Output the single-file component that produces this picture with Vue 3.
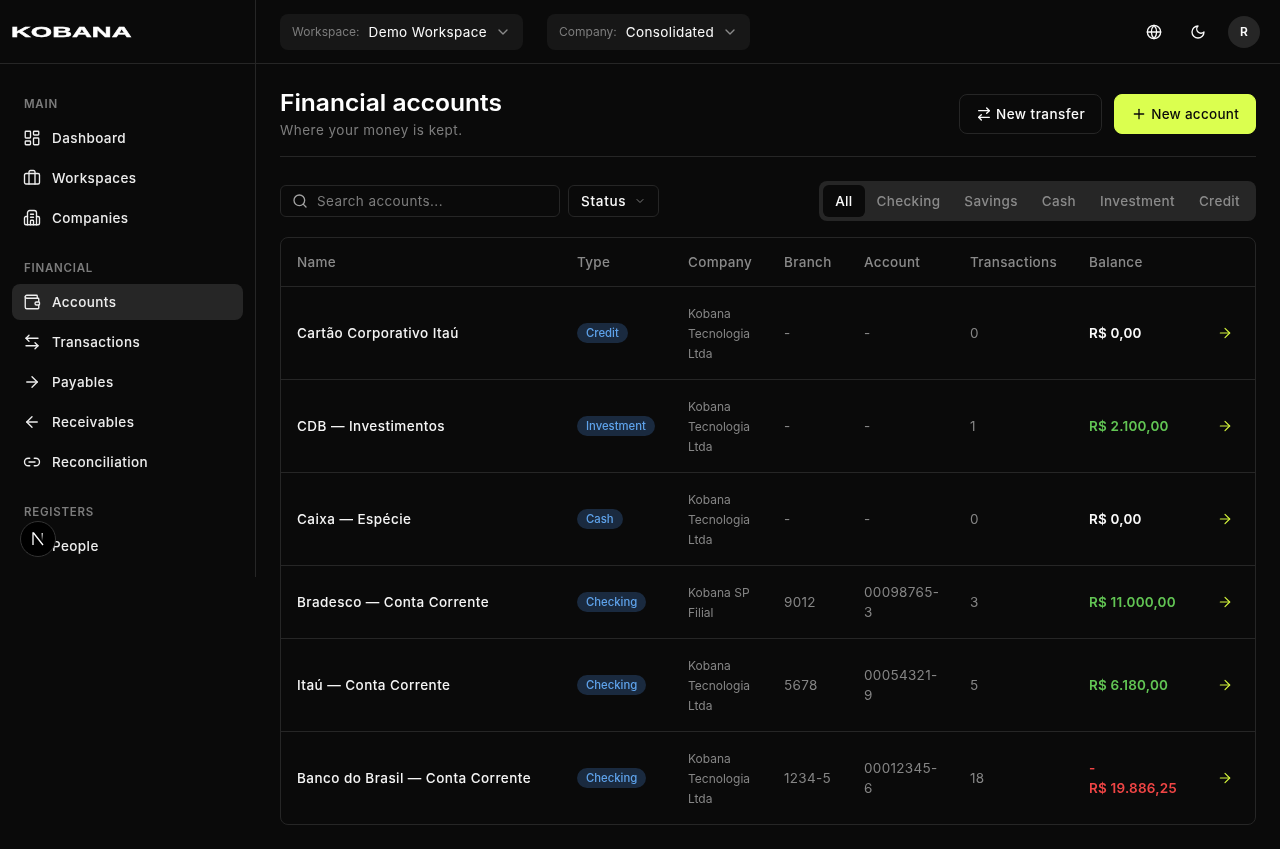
<script setup>
const navSections = [
  {
    title: 'Main',
    items: [
      { label: 'Dashboard', icon: 'dashboard' },
      { label: 'Workspaces', icon: 'briefcase' },
      { label: 'Companies', icon: 'building' }
    ]
  },
  {
    title: 'Financial',
    items: [
      { label: 'Accounts', icon: 'wallet', active: true },
      { label: 'Transactions', icon: 'swap' },
      { label: 'Payables', icon: 'right' },
      { label: 'Receivables', icon: 'left' },
      { label: 'Reconciliation', icon: 'link' }
    ]
  },
  {
    title: 'Registers',
    items: [{ label: 'People', icon: 'people' }]
  }
]

const iconPaths = {
  dashboard: '<rect x="3" y="3" width="7" height="9" rx="1"/><rect x="14" y="3" width="7" height="5" rx="1"/><rect x="14" y="12" width="7" height="9" rx="1"/><rect x="3" y="16" width="7" height="5" rx="1"/>',
  briefcase: '<path d="M16 20V4a2 2 0 0 0-2-2h-4a2 2 0 0 0-2 2v16"/><rect x="2" y="6" width="20" height="14" rx="2"/>',
  building: '<path d="M6 21V5a3 3 0 0 1 3-3h6a3 3 0 0 1 3 3v16"/><path d="M6 10H4a2 2 0 0 0-2 2v7a2 2 0 0 0 2 2h16a2 2 0 0 0 2-2v-7a2 2 0 0 0-2-2h-2"/><path d="M10 7h4"/><path d="M10 11h4"/><path d="M10 21v-5a1 1 0 0 1 1-1h2a1 1 0 0 1 1 1v5"/>',
  wallet: '<path d="M19 7V4a1 1 0 0 0-1-1H5a2 2 0 0 0 0 4h15a1 1 0 0 1 1 1v4h-3a2 2 0 0 0 0 4h3a1 1 0 0 0 1-1v-2a1 1 0 0 0-1-1"/><path d="M3 5v14a2 2 0 0 0 2 2h15a1 1 0 0 0 1-1v-4"/>',
  swap: '<path d="M8 3 4 7l4 4"/><path d="M4 7h16"/><path d="m16 21 4-4-4-4"/><path d="M20 17H4"/>',
  transfer: '<path d="m16 3 4 4-4 4"/><path d="M20 7H4"/><path d="m8 21-4-4 4-4"/><path d="M4 17h16"/>',
  right: '<path d="M5 12h14"/><path d="m12 5 7 7-7 7"/>',
  left: '<path d="m12 19-7-7 7-7"/><path d="M19 12H5"/>',
  link: '<path d="M9 17H7A5 5 0 0 1 7 7h2"/><path d="M15 7h2a5 5 0 1 1 0 10h-2"/><line x1="8" x2="16" y1="12" y2="12"/>',
  people: '<path d="M18 20v-2a4 4 0 0 0-4-4h-4a4 4 0 0 0-4 4v2"/><circle cx="12" cy="7" r="4"/>',
  globe: '<circle cx="12" cy="12" r="10"/><path d="M12 2a14.5 14.5 0 0 0 0 20 14.5 14.5 0 0 0 0-20"/><path d="M2 12h20"/>',
  moon: '<path d="M12 3a6 6 0 0 0 9 9 9 9 0 1 1-9-9Z"/>',
  plus: '<path d="M5 12h14"/><path d="M12 5v14"/>',
  search: '<circle cx="11" cy="11" r="8"/><path d="m21 21-4.3-4.3"/>',
  chevron: '<path d="m6 9 6 6 6-6"/>'
}

const tabs = ['All', 'Checking', 'Savings', 'Cash', 'Investment', 'Credit']

const accounts = [
  { name: 'Cartão Corporativo Itaú', type: 'Credit', company: 'Kobana Tecnologia Ltda', branch: '-', account: '-', transactions: 0, balance: 'R$\u00a00,00', tone: 'zero' },
  { name: 'CDB — Investimentos', type: 'Investment', company: 'Kobana Tecnologia Ltda', branch: '-', account: '-', transactions: 1, balance: 'R$\u00a02.100,00', tone: 'positive' },
  { name: 'Caixa — Espécie', type: 'Cash', company: 'Kobana Tecnologia Ltda', branch: '-', account: '-', transactions: 0, balance: 'R$\u00a00,00', tone: 'zero' },
  { name: 'Bradesco — Conta Corrente', type: 'Checking', company: 'Kobana SP Filial', branch: '9012', account: '00098765-3', transactions: 3, balance: 'R$\u00a011.000,00', tone: 'positive' },
  { name: 'Itaú — Conta Corrente', type: 'Checking', company: 'Kobana Tecnologia Ltda', branch: '5678', account: '00054321-9', transactions: 5, balance: 'R$\u00a06.180,00', tone: 'positive' },
  { name: 'Banco do Brasil — Conta Corrente', type: 'Checking', company: 'Kobana Tecnologia Ltda', branch: '1234-5', account: '00012345-6', transactions: 18, balance: '-R$\u00a019.886,25', tone: 'negative' }
]
</script>

<template>
  <div class="app">
    <aside class="sidebar">
      <div class="brand"><span class="logo">KOBANA</span></div>
      <nav class="nav">
        <div v-for="section in navSections" :key="section.title" class="nav-section">
          <div class="nav-title">{{ section.title }}</div>
          <a
            v-for="item in section.items"
            :key="item.label"
            class="nav-item"
            :class="{ active: item.active }"
          >
            <svg class="icon" viewBox="0 0 24 24" v-html="iconPaths[item.icon]"></svg>
            <span>{{ item.label }}</span>
          </a>
        </div>
      </nav>
    </aside>

    <div class="main">
      <header class="topbar">
        <button class="context">
          <span class="context-label">Workspace:</span>
          <span class="context-value">Demo Workspace</span>
          <svg class="icon" viewBox="0 0 24 24" v-html="iconPaths.chevron"></svg>
        </button>
        <button class="context">
          <span class="context-label">Company:</span>
          <span class="context-value">Consolidated</span>
          <svg class="icon" viewBox="0 0 24 24" v-html="iconPaths.chevron"></svg>
        </button>
        <div class="topbar-actions">
          <button class="icon-btn"><svg class="icon" viewBox="0 0 24 24" v-html="iconPaths.globe"></svg></button>
          <button class="icon-btn"><svg class="icon" viewBox="0 0 24 24" v-html="iconPaths.moon"></svg></button>
          <div class="avatar">R</div>
        </div>
      </header>

      <main class="content">
        <div class="page-head">
          <div>
            <h1>Financial accounts</h1>
            <p>Where your money is kept.</p>
          </div>
          <div class="page-actions">
            <button class="btn">
              <svg class="icon" viewBox="0 0 24 24" v-html="iconPaths.transfer"></svg>
              New transfer
            </button>
            <button class="btn primary">
              <svg class="icon" viewBox="0 0 24 24" v-html="iconPaths.plus"></svg>
              New account
            </button>
          </div>
        </div>

        <div class="toolbar">
          <div class="search">
            <svg class="icon" viewBox="0 0 24 24" v-html="iconPaths.search"></svg>
            <span>Search accounts...</span>
          </div>
          <button class="status">
            Status
            <svg class="icon" viewBox="0 0 24 24" v-html="iconPaths.chevron"></svg>
          </button>
          <div class="tabs">
            <span v-for="(tab, index) in tabs" :key="tab" class="tab" :class="{ active: index === 0 }">{{ tab }}</span>
          </div>
        </div>

        <div class="table-wrap">
          <table>
            <colgroup>
              <col class="c-name" />
              <col class="c-type" />
              <col class="c-company" />
              <col class="c-branch" />
              <col class="c-account" />
              <col class="c-tx" />
              <col class="c-balance" />
              <col />
            </colgroup>
            <thead>
              <tr>
                <th>Name</th>
                <th>Type</th>
                <th>Company</th>
                <th>Branch</th>
                <th>Account</th>
                <th>Transactions</th>
                <th>Balance</th>
                <th></th>
              </tr>
            </thead>
            <tbody>
              <tr v-for="row in accounts" :key="row.name">
                <td class="name">{{ row.name }}</td>
                <td><span class="pill">{{ row.type }}</span></td>
                <td class="company">{{ row.company }}</td>
                <td class="muted">{{ row.branch }}</td>
                <td class="muted">{{ row.account }}</td>
                <td class="muted">{{ row.transactions }}</td>
                <td class="balance" :class="row.tone">{{ row.balance }}</td>
                <td class="go"><svg class="icon" viewBox="0 0 24 24" v-html="iconPaths.right"></svg></td>
              </tr>
            </tbody>
          </table>
        </div>
      </main>
    </div>

    <div class="dev-badge">
      <svg viewBox="0 0 14 14" width="14" height="14">
        <defs>
          <linearGradient id="n-fade" x1="0" y1="0" x2="0" y2="1">
            <stop offset="0" stop-color="#fff" />
            <stop offset="1" stop-color="#fff" stop-opacity="0" />
          </linearGradient>
        </defs>
        <path d="M2 13V1h.6L12 13" fill="none" stroke="#fff" stroke-width="1.3" />
        <rect x="10.6" y="1" width="1.2" height="8" fill="url(#n-fade)" />
      </svg>
    </div>
  </div>
</template>

<style>
html, body {
  margin: 0;
  background: #0a0a0a;
}
</style>

<style scoped>
.app {
  position: relative;
  display: flex;
  align-items: flex-start;
  min-height: 849px;
  color: #fafafa;
  font-family: Inter, "Liberation Sans", sans-serif;
  font-size: 14px;
  will-change: transform;
}

.icon {
  display: block;
  width: 16px;
  height: 16px;
  flex: none;
  fill: none;
  stroke: currentColor;
  stroke-width: 2;
  stroke-linecap: round;
  stroke-linejoin: round;
}

button {
  font: inherit;
  color: inherit;
  background: none;
  border: none;
  padding: 0;
}

.sidebar {
  width: 255px;
  flex: none;
  border-right: 1px solid #262626;
}

.brand {
  height: 63px;
  display: flex;
  align-items: center;
  padding-left: 11px;
  border-bottom: 1px solid #262626;
}

.logo {
  display: block;
  font-family: "Liberation Sans", sans-serif;
  font-size: 15px;
  font-weight: 700;
  color: #fff;
  transform: scaleX(1.83);
  transform-origin: left center;
  -webkit-text-stroke: 0.4px #fff;
}

.nav {
  padding: 32px 12px 13px;
  display: flex;
  flex-direction: column;
  gap: 24px;
}

.nav-section {
  display: flex;
  flex-direction: column;
  gap: 4px;
}

.nav-title {
  height: 16px;
  line-height: 16px;
  margin: 0 0 4px 12px;
  font-size: 11.5px;
  font-weight: 600;
  letter-spacing: 0.75px;
  text-transform: uppercase;
  color: #7c7c7c;
}

.nav-item {
  height: 36px;
  display: flex;
  align-items: center;
  gap: 12px;
  padding: 0 12px;
  border-radius: 8px;
  font-weight: 500;
  font-size: 13.5px;
  letter-spacing: 0.4px;
  color: #ededed;
}

.nav-item .icon {
  width: 18px;
  height: 18px;
  margin: 0 -1px;
  stroke-width: 1.8;
}

.nav-item.active {
  background: #262626;
}

.main {
  flex: 1;
  min-width: 0;
}

.topbar {
  height: 63px;
  display: flex;
  align-items: center;
  gap: 24px;
  padding: 0 20px 0 24px;
  border-bottom: 1px solid #262626;
}

.context {
  height: 36px;
  display: flex;
  align-items: center;
  padding: 0 12px;
  background: #171717;
  border-radius: 8px;
}

.context-label {
  font-size: 12px;
  color: #7c7c7c;
  margin-right: 9px;
}

.context-value {
  font-size: 13.5px;
  letter-spacing: 0.36px;
  color: #fafafa;
  margin-right: 8px;
}

.context .icon {
  color: #8a8a8a;
}

.topbar-actions {
  margin-left: auto;
  display: flex;
  align-items: center;
  gap: 8px;
}

.icon-btn {
  width: 36px;
  height: 36px;
  display: flex;
  align-items: center;
  justify-content: center;
}

.avatar {
  width: 32px;
  height: 32px;
  margin-left: 4px;
  border-radius: 50%;
  background: #262626;
  display: flex;
  align-items: center;
  justify-content: center;
  font-size: 12px;
  font-weight: 600;
}

.content {
  padding: 24px 24px 24px;
}

.page-head {
  display: flex;
  justify-content: space-between;
  align-items: center;
  padding-bottom: 16px;
  border-bottom: 1px solid #262626;
}

h1 {
  margin: 0;
  height: 32px;
  font-size: 23px;
  line-height: 31px;
  font-weight: 600;
  color: #fff;
  transform: scaleX(1.067);
  transform-origin: left center;
}

.page-head p {
  margin: 0;
  font-size: 13.5px;
  line-height: 20px;
  letter-spacing: 0.48px;
  color: #7c7c7c;
}

.page-actions {
  display: flex;
  gap: 12px;
}

.btn {
  height: 40px;
  box-sizing: border-box;
  display: flex;
  align-items: center;
  gap: 4px;
  padding: 0 16px;
  border: 1px solid #262626;
  border-radius: 8px;
  font-size: 13.5px;
  font-weight: 500;
  letter-spacing: 0.48px;
}

.btn.primary {
  background: #dbff4f;
  border-color: #dbff4f;
  color: #0a0a0a;
  letter-spacing: 0.26px;
}

.toolbar {
  display: flex;
  align-items: center;
  gap: 8px;
  margin-top: 24px;
}

.search {
  width: 280px;
  height: 32px;
  box-sizing: border-box;
  display: flex;
  align-items: center;
  gap: 9px;
  padding: 0 11px;
  border: 1px solid #262626;
  border-radius: 6px;
  color: #7c7c7c;
  font-size: 13.5px;
  letter-spacing: 0.4px;
}

.search .icon {
  color: #a3a3a3;
}

.status {
  height: 32px;
  box-sizing: border-box;
  display: flex;
  align-items: center;
  gap: 8px;
  padding: 0 12px;
  border: 1px solid #262626;
  border-radius: 6px;
  font-size: 13.5px;
  font-weight: 500;
  letter-spacing: 0.7px;
}

.status .icon {
  width: 12px;
  height: 12px;
  color: #7c7c7c;
}

.tabs {
  margin-left: auto;
  display: flex;
  padding: 4px;
  background: #262626;
  border-radius: 8px;
}

.tab {
  height: 32px;
  line-height: 32px;
  padding: 0 12px;
  border-radius: 6px;
  font-size: 13.5px;
  font-weight: 500;
  letter-spacing: 0.33px;
  color: #8a8a8a;
}

.tab.active {
  background: #0a0a0a;
  color: #fafafa;
}

.table-wrap {
  margin-top: 16px;
  border: 1px solid #262626;
  border-radius: 8px;
  overflow: hidden;
}

table {
  width: 100%;
  border-collapse: collapse;
  table-layout: fixed;
}

.c-name { width: 280px; }
.c-type { width: 111px; }
.c-company { width: 96px; }
.c-branch { width: 80px; }
.c-account { width: 106px; }
.c-tx { width: 119px; }
.c-balance { width: 122px; }

th {
  height: 48px;
  padding: 0 16px;
  text-align: left;
  font-size: 13.5px;
  font-weight: 500;
  letter-spacing: 0.32px;
  color: #8a8a8a;
}

thead tr {
  border-bottom: 1px solid #262626;
}

tbody tr + tr {
  border-top: 1px solid #262626;
}

td {
  padding: 16px;
  line-height: 20px;
  font-size: 13.5px;
  letter-spacing: 0.3px;
}

.name {
  font-weight: 500;
  letter-spacing: 0.45px;
  color: #f5f5f5;
}

.pill {
  display: block;
  width: fit-content;
  height: 20px;
  line-height: 21px;
  padding: 0 9px;
  border-radius: 10px;
  background: #1a2a3f;
  color: #5ea2ea;
  font-size: 11.3px;
  font-weight: 500;
  letter-spacing: 0;
}

.company {
  padding-top: 17px;
  padding-bottom: 15px;
  font-size: 12px;
  letter-spacing: 0;
  color: #858585;
}

.muted {
  color: #858585;
}

.balance {
  font-weight: 600;
  letter-spacing: 0.2px;
}

.balance.zero { color: #fafafa; }
.balance.positive { color: #62c554; }
.balance.negative { color: #f04545; }

.go {
  padding-left: 0;
  color: #d4f53c;
}

.go .icon {
  margin-left: 22px;
  stroke-width: 1.75;
}

.dev-badge {
  position: absolute;
  left: 20px;
  top: 521px;
  width: 36px;
  height: 36px;
  box-sizing: border-box;
  border-radius: 50%;
  background: #000;
  border: 1px solid #333;
  display: flex;
  align-items: center;
  justify-content: center;
}
</style>
